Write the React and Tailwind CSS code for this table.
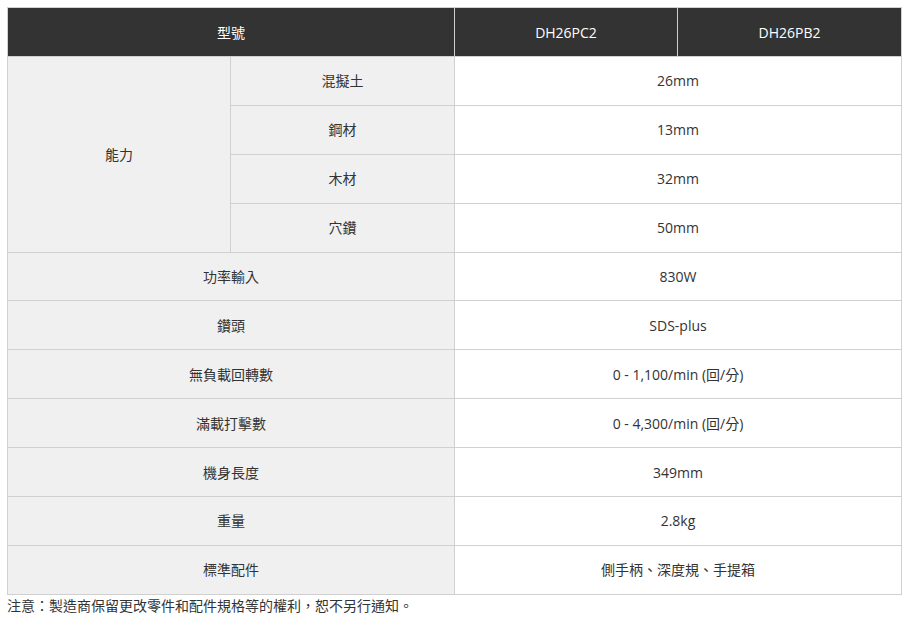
export default function App() {
  // spec rows after the 能力 group
  const rows = [
    { label: "功率輸入", value: "830W" },
    { label: "鑽頭", value: "SDS-plus" },
    { label: "無負載回轉數", value: "0 - 1,100/min (回/分)" },
    { label: "滿載打擊數", value: "0 - 4,300/min (回/分)" },
    { label: "機身長度", value: "349mm" },
    { label: "重量", value: "2.8kg" },
    { label: "標準配件", value: "側手柄、深度規、手提箱" },
  ];

  const capacity = [
    { label: "混擬土", value: "26mm" },
    { label: "鋼材", value: "13mm" },
    { label: "木材", value: "32mm" },
    { label: "穴鑽", value: "50mm" },
  ];

  const cell = "border border-[#d0d0d0] text-center align-middle p-0";

  return (
    <div
      className="bg-white text-[#333] text-[14px] pt-[7px] pl-[7px]"
      style={{ fontFamily: '"Open Sans", "Noto Sans CJK TC", sans-serif' }}
    >
      <table className="w-[895px] border-collapse table-fixed">
        <colgroup>
          <col className="w-[223px]" />
          <col className="w-[224px]" />
          <col className="w-[223px]" />
          <col className="w-[224px]" />
        </colgroup>
        <thead>
          <tr className="h-[49px]">
            <th colSpan={2} className={`${cell} bg-[#333] text-white font-normal`}>
              型號
            </th>
            <th className={`${cell} bg-[#333] text-white font-normal`}>DH26PC2</th>
            <th className={`${cell} bg-[#333] text-white font-normal`}>DH26PB2</th>
          </tr>
        </thead>
        <tbody>
          {capacity.map((c, i) => (
            <tr key={c.label} className="h-[48.9px]">
              {i === 0 && (
                <td rowSpan={4} className={`${cell} bg-[#f0f0f0]`}>
                  能力
                </td>
              )}
              <td className={`${cell} bg-[#f0f0f0]`}>{c.label}</td>
              <td colSpan={2} className={`${cell} bg-white`}>
                {c.value}
              </td>
            </tr>
          ))}
          {rows.map((r) => (
            <tr key={r.label} className="h-[48.9px]">
              <td colSpan={2} className={`${cell} bg-[#f0f0f0]`}>
                {r.label}
              </td>
              <td colSpan={2} className={`${cell} bg-white`}>
                {r.value}
              </td>
            </tr>
          ))}
        </tbody>
      </table>
      <p className="text-[14px] leading-[22px]">
        注意：製造商保留更改零件和配件規格等的權利，恕不另行通知。
      </p>
    </div>
  );
}
